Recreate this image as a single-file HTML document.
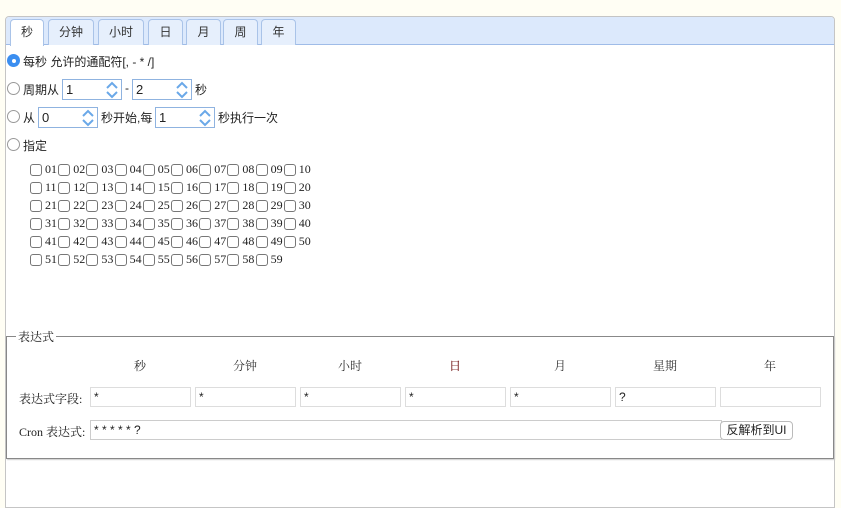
<!DOCTYPE html>
<html><head><meta charset="utf-8"><style>
body{margin:0;width:841px;height:500px;background:#fffef4;position:relative;overflow:hidden;font-family:"Liberation Sans","Noto Sans CJK SC",sans-serif;font-size:12px;color:#222}
.a{position:absolute}
#panel{left:5px;top:16px;width:828px;height:490px;border:1px solid #c5c5c5;border-radius:4px 4px 0 0;background:#fff}
#hdr{left:6px;top:17px;width:828px;height:27px;background:#dce9fc;border-bottom:1px solid #9fbce8;border-radius:3px 3px 0 0}
.tab{position:absolute;top:19px;height:25px;border:1px solid #a9c3e8;border-bottom:none;border-radius:4px 4px 0 0;background:#e6effc;text-align:center;line-height:25px;color:#333;font-size:12px}
.tab.on{background:#fff;height:26px}
.radio{width:13px;height:13px;border:1px solid #999;border-radius:50%;background:#fff;box-sizing:border-box}
.radio.on{border:none;background:#3b8ef0}
.radio.on::after{content:"";position:absolute;left:4.5px;top:4.5px;width:4px;height:4px;border-radius:50%;background:#fff}
.spin{height:21px;border:1px solid #8fb3e0;box-sizing:border-box;background:#fff;font-size:13px;line-height:20px;padding-left:3px}
.spin svg{position:absolute;right:2px;top:1px}
.cb{width:12px;height:12px;border:1px solid #777;border-radius:3px;box-sizing:border-box;background:#fff}
.num{font-family:"Liberation Serif",serif;font-size:12px}
.inp{height:20px;border:1px solid #ddd;box-sizing:border-box;background:#fff;font-size:12px;padding-left:3px;line-height:18px}
.hd{width:100px;text-align:center;top:357px;font-family:"Liberation Serif","Noto Serif CJK SC",serif;font-size:12px;color:#333}
</style></head><body>
<div class="a" id="panel"></div>
<div class="a" id="hdr"></div>
<div class="tab on" style="left:10px;width:32px">秒</div>
<div class="tab" style="left:48px;width:44px">分钟</div>
<div class="tab" style="left:98px;width:44px">小时</div>
<div class="tab" style="left:148px;width:33px">日</div>
<div class="tab" style="left:186px;width:33px">月</div>
<div class="tab" style="left:223px;width:33px">周</div>
<div class="tab" style="left:261px;width:33px">年</div>

<div class="a radio on" style="left:7px;top:54px"></div>
<div class="a" style="left:23px;top:53px">每秒 允许的通配符[, - * /]</div>

<div class="a radio" style="left:7px;top:82px"></div>
<div class="a" style="left:23px;top:81px">周期从</div>
<div class="a spin" style="left:62px;top:79px;width:60px">1<svg width="14" height="18" viewBox="0 0 14 18"><path d="M2 7L7 2L12 7M2 11L7 16L12 11" fill="none" stroke="#6aa8e8" stroke-width="2"/></svg></div>
<div class="a" style="left:125px;top:81px">-</div>
<div class="a spin" style="left:132px;top:79px;width:60px">2<svg width="14" height="18" viewBox="0 0 14 18"><path d="M2 7L7 2L12 7M2 11L7 16L12 11" fill="none" stroke="#6aa8e8" stroke-width="2"/></svg></div>
<div class="a" style="left:195px;top:81px">秒</div>

<div class="a radio" style="left:7px;top:110px"></div>
<div class="a" style="left:23px;top:109px">从</div>
<div class="a spin" style="left:38px;top:107px;width:60px">0<svg width="14" height="18" viewBox="0 0 14 18"><path d="M2 7L7 2L12 7M2 11L7 16L12 11" fill="none" stroke="#6aa8e8" stroke-width="2"/></svg></div>
<div class="a" style="left:101px;top:109px">秒开始,每</div>
<div class="a spin" style="left:155px;top:107px;width:60px">1<svg width="14" height="18" viewBox="0 0 14 18"><path d="M2 7L7 2L12 7M2 11L7 16L12 11" fill="none" stroke="#6aa8e8" stroke-width="2"/></svg></div>
<div class="a" style="left:218px;top:109px">秒执行一次</div>

<div class="a radio" style="left:7px;top:138px"></div>
<div class="a" style="left:23px;top:137px">指定</div>

<div id="cbs"></div>
<script>
var h='';for(var i=1;i<=59;i++){var r=Math.floor((i-1)/10),c=(i-1)%10;var x=30+c*28.2,y=164+r*18;
h+='<div class="a cb" style="left:'+x+'px;top:'+(y)+'px"></div><div class="a num" style="left:'+(x+15)+'px;top:'+(y-2)+'px">'+(i<10?'0'+i:i)+'</div>';}
document.getElementById('cbs').innerHTML=h;
</script>

<div class="a" style="left:6px;top:336px;width:826px;height:121px;border:1px solid #888;box-shadow:1px 1px 1px #ccc"></div>
<div class="a" style="left:16px;top:328px;background:#fff;padding:0 2px;font-family:'Liberation Serif','Noto Serif CJK SC',serif;font-size:12px">表达式</div>
<div class="a hd" style="left:90px">秒</div>
<div class="a hd" style="left:195px">分钟</div>
<div class="a hd" style="left:300px">小时</div>
<div class="a hd" style="left:405px;color:#600">日</div>
<div class="a hd" style="left:510px">月</div>
<div class="a hd" style="left:615px">星期</div>
<div class="a hd" style="left:720px">年</div>
<div class="a" style="left:19px;top:390px;font-family:'Liberation Serif','Noto Serif CJK SC',serif">表达式字段:</div>
<div class="a inp" style="left:90px;top:387px;width:101px">*</div>
<div class="a inp" style="left:195px;top:387px;width:101px">*</div>
<div class="a inp" style="left:300px;top:387px;width:101px">*</div>
<div class="a inp" style="left:405px;top:387px;width:101px">*</div>
<div class="a inp" style="left:510px;top:387px;width:101px">*</div>
<div class="a inp" style="left:615px;top:387px;width:101px">?</div>
<div class="a inp" style="left:720px;top:387px;width:101px"></div>
<div class="a" style="left:19px;top:423px;font-family:'Liberation Serif','Noto Serif CJK SC',serif">Cron 表达式:</div>
<div class="a inp" style="left:90px;top:420px;width:632px;border-color:#ccc">* * * * * ?</div>
<div class="a" style="left:720px;top:421px;width:73px;height:19px;border:1px solid #bbb;border-radius:4px;background:#fff;box-sizing:border-box;text-align:center;line-height:17px;font-size:12px">反解析到UI</div>
</body></html>
